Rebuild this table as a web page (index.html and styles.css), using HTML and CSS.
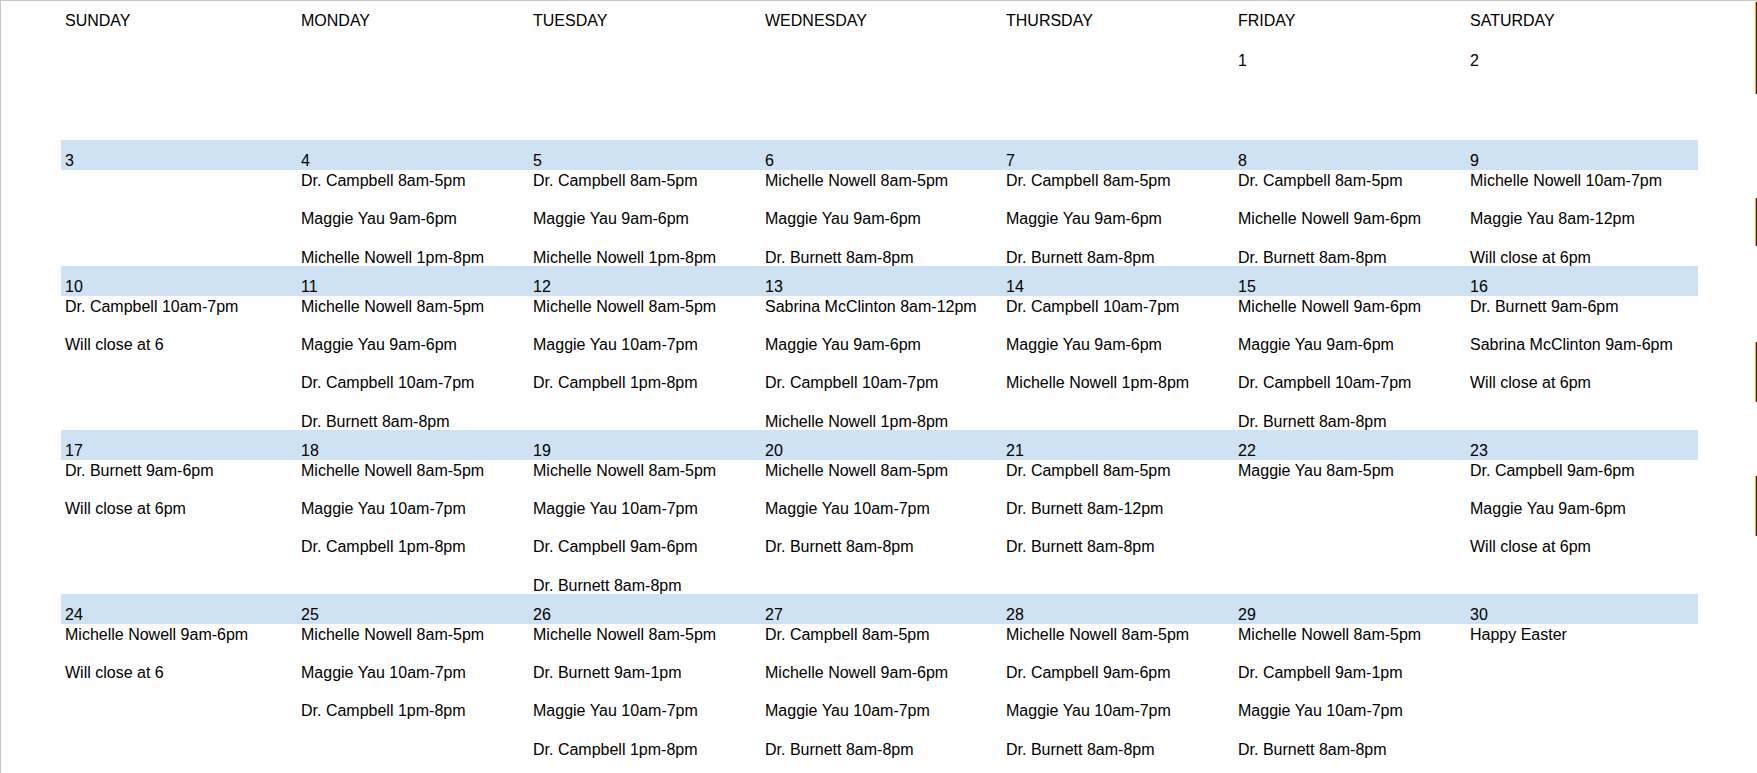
FILE: index.html
```html
<!DOCTYPE html>
<html lang="en">
<head>
<meta charset="utf-8">
<title>Schedule</title>
<link rel="stylesheet" href="styles.css">
</head>
<body>
<div class="sheet">
  <div class="row head">
    <div class="cell">SUNDAY</div><div class="cell">MONDAY</div><div class="cell">TUESDAY</div><div class="cell">WEDNESDAY</div><div class="cell">THURSDAY</div><div class="cell">FRIDAY</div><div class="cell">SATURDAY</div>
  </div>

  <div class="row band plain">
    <div class="cell"></div><div class="cell"></div><div class="cell"></div><div class="cell"></div><div class="cell"></div><div class="cell">1</div><div class="cell">2</div>
  </div>
  <div class="row body empty"></div>

  <div class="row band">
    <div class="cell">3</div><div class="cell">4</div><div class="cell">5</div><div class="cell">6</div><div class="cell">7</div><div class="cell">8</div><div class="cell">9</div>
  </div>
  <div class="row body">
    <div class="day"></div>
    <div class="day"><div class="entry">Dr. Campbell 8am-5pm</div><div class="entry">Maggie Yau 9am-6pm</div><div class="entry">Michelle Nowell 1pm-8pm</div></div>
    <div class="day"><div class="entry">Dr. Campbell 8am-5pm</div><div class="entry">Maggie Yau 9am-6pm</div><div class="entry">Michelle Nowell 1pm-8pm</div></div>
    <div class="day"><div class="entry">Michelle Nowell 8am-5pm</div><div class="entry">Maggie Yau 9am-6pm</div><div class="entry">Dr. Burnett 8am-8pm</div></div>
    <div class="day"><div class="entry">Dr. Campbell 8am-5pm</div><div class="entry">Maggie Yau 9am-6pm</div><div class="entry">Dr. Burnett 8am-8pm</div></div>
    <div class="day"><div class="entry">Dr. Campbell 8am-5pm</div><div class="entry">Michelle Nowell 9am-6pm</div><div class="entry">Dr. Burnett 8am-8pm</div></div>
    <div class="day"><div class="entry">Michelle Nowell 10am-7pm</div><div class="entry">Maggie Yau 8am-12pm</div><div class="entry">Will close at 6pm</div></div>
  </div>

  <div class="row band">
    <div class="cell">10</div><div class="cell">11</div><div class="cell">12</div><div class="cell">13</div><div class="cell">14</div><div class="cell">15</div><div class="cell">16</div>
  </div>
  <div class="row body">
    <div class="day"><div class="entry">Dr. Campbell 10am-7pm</div><div class="entry">Will close at 6</div></div>
    <div class="day"><div class="entry">Michelle Nowell 8am-5pm</div><div class="entry">Maggie Yau 9am-6pm</div><div class="entry">Dr. Campbell 10am-7pm</div><div class="entry">Dr. Burnett 8am-8pm</div></div>
    <div class="day"><div class="entry">Michelle Nowell 8am-5pm</div><div class="entry">Maggie Yau 10am-7pm</div><div class="entry">Dr. Campbell 1pm-8pm</div></div>
    <div class="day"><div class="entry">Sabrina McClinton 8am-12pm</div><div class="entry">Maggie Yau 9am-6pm</div><div class="entry">Dr. Campbell 10am-7pm</div><div class="entry">Michelle Nowell 1pm-8pm</div></div>
    <div class="day"><div class="entry">Dr. Campbell 10am-7pm</div><div class="entry">Maggie Yau 9am-6pm</div><div class="entry">Michelle Nowell 1pm-8pm</div></div>
    <div class="day"><div class="entry">Michelle Nowell 9am-6pm</div><div class="entry">Maggie Yau 9am-6pm</div><div class="entry">Dr. Campbell 10am-7pm</div><div class="entry">Dr. Burnett 8am-8pm</div></div>
    <div class="day"><div class="entry">Dr. Burnett 9am-6pm</div><div class="entry">Sabrina McClinton 9am-6pm</div><div class="entry">Will close at 6pm</div></div>
  </div>

  <div class="row band">
    <div class="cell">17</div><div class="cell">18</div><div class="cell">19</div><div class="cell">20</div><div class="cell">21</div><div class="cell">22</div><div class="cell">23</div>
  </div>
  <div class="row body">
    <div class="day"><div class="entry">Dr. Burnett 9am-6pm</div><div class="entry">Will close at 6pm</div></div>
    <div class="day"><div class="entry">Michelle Nowell 8am-5pm</div><div class="entry">Maggie Yau 10am-7pm</div><div class="entry">Dr. Campbell 1pm-8pm</div></div>
    <div class="day"><div class="entry">Michelle Nowell 8am-5pm</div><div class="entry">Maggie Yau 10am-7pm</div><div class="entry">Dr. Campbell 9am-6pm</div><div class="entry">Dr. Burnett 8am-8pm</div></div>
    <div class="day"><div class="entry">Michelle Nowell 8am-5pm</div><div class="entry">Maggie Yau 10am-7pm</div><div class="entry">Dr. Burnett 8am-8pm</div></div>
    <div class="day"><div class="entry">Dr. Campbell 8am-5pm</div><div class="entry">Dr. Burnett 8am-12pm</div><div class="entry">Dr. Burnett 8am-8pm</div></div>
    <div class="day"><div class="entry">Maggie Yau 8am-5pm</div></div>
    <div class="day"><div class="entry">Dr. Campbell 9am-6pm</div><div class="entry">Maggie Yau 9am-6pm</div><div class="entry">Will close at 6pm</div></div>
  </div>

  <div class="row band">
    <div class="cell">24</div><div class="cell">25</div><div class="cell">26</div><div class="cell">27</div><div class="cell">28</div><div class="cell">29</div><div class="cell">30</div>
  </div>
  <div class="row body">
    <div class="day"><div class="entry">Michelle Nowell 9am-6pm</div><div class="entry">Will close at 6</div></div>
    <div class="day"><div class="entry">Michelle Nowell 8am-5pm</div><div class="entry">Maggie Yau 10am-7pm</div><div class="entry">Dr. Campbell 1pm-8pm</div></div>
    <div class="day"><div class="entry">Michelle Nowell 8am-5pm</div><div class="entry">Dr. Burnett 9am-1pm</div><div class="entry">Maggie Yau 10am-7pm</div><div class="entry">Dr. Campbell 1pm-8pm</div></div>
    <div class="day"><div class="entry">Dr. Campbell 8am-5pm</div><div class="entry">Michelle Nowell 9am-6pm</div><div class="entry">Maggie Yau 10am-7pm</div><div class="entry">Dr. Burnett 8am-8pm</div></div>
    <div class="day"><div class="entry">Michelle Nowell 8am-5pm</div><div class="entry">Dr. Campbell 9am-6pm</div><div class="entry">Maggie Yau 10am-7pm</div><div class="entry">Dr. Burnett 8am-8pm</div></div>
    <div class="day"><div class="entry">Michelle Nowell 8am-5pm</div><div class="entry">Dr. Campbell 9am-1pm</div><div class="entry">Maggie Yau 10am-7pm</div><div class="entry">Dr. Burnett 8am-8pm</div></div>
    <div class="day"><div class="entry">Happy Easter</div></div>
  </div>

  <div class="mark m1"></div>
  <div class="mark m2"></div>
  <div class="mark m3"></div>
  <div class="mark m4"></div>
</div>
</body>
</html>
```

FILE: styles.css
```css
html, body {
  margin: 0;
  height: 100%;
}

body {
  font-family: "Liberation Sans", Arial, sans-serif;
  font-size: 16px;
  color: #000;
  background: #fff;
  overflow: hidden;
}

.sheet {
  position: relative;
  box-sizing: border-box;
  height: 100vh;
  border-top: 1px solid #c6c6c6;
  border-left: 1px solid #c6c6c6;
  padding-left: 60px;
}

.row {
  display: grid;
  grid-template-columns: 236px 232px 232px 241px 232px 232px 232px;
  width: 1637px;
}

.head {
  height: 29px;
}

.band {
  height: 30px;
  background: #cfe2f3;
}

.band.plain {
  height: 40px;
  background: none;
}

.cell {
  display: flex;
  align-items: flex-end;
  padding-left: 4px;
  line-height: 19px;
  white-space: nowrap;
}

.day {
  display: flex;
  flex-direction: column;
  gap: 19.15px;
  padding-left: 4px;
}

.entry {
  height: 19.15px;
  line-height: 21px;
  white-space: nowrap;
}

.body.empty {
  height: 70px;
}

.mark {
  position: absolute;
  right: 0;
  width: 2px;
  background: #561a00;
  border-left: 1px solid #e8b040;
  box-sizing: border-box;
}

.m1 { top: 1px; height: 92px; }
.m2 { top: 197px; height: 48px; }
.m3 { top: 341px; height: 60px; }
.m4 { top: 475px; height: 60px; }
```
